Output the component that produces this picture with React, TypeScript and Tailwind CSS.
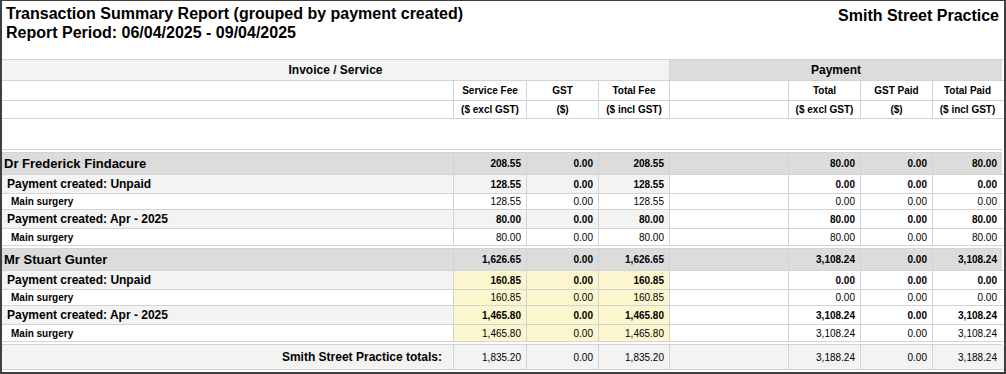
import React from "react";

const GRID = "grid grid-cols-[451px_73px_72px_71px_119px_72px_72px_70px]";
const LINE = "border-[#d3d3d3]";

type Sub = { label: string; v: string[] };
type Group = { name: string; totals: string[]; yellow: boolean; subs: Sub[] };

const groups: Group[] = [
  {
    name: "Dr Frederick Findacure",
    totals: ["208.55", "0.00", "208.55", "80.00", "0.00", "80.00"],
    yellow: false,
    subs: [
      { label: "Payment created: Unpaid", v: ["128.55", "0.00", "128.55", "0.00", "0.00", "0.00"] },
      { label: "Payment created: Apr - 2025", v: ["80.00", "0.00", "80.00", "80.00", "0.00", "80.00"] },
    ],
  },
  {
    name: "Mr Stuart Gunter",
    totals: ["1,626.65", "0.00", "1,626.65", "3,108.24", "0.00", "3,108.24"],
    yellow: true,
    subs: [
      { label: "Payment created: Unpaid", v: ["160.85", "0.00", "160.85", "0.00", "0.00", "0.00"] },
      { label: "Payment created: Apr - 2025", v: ["1,465.80", "0.00", "1,465.80", "3,108.24", "0.00", "3,108.24"] },
    ],
  },
];

function NumCell({ value, bg, bold }: { value: string; bg: string; bold: boolean }) {
  return (
    <div
      className={`flex items-center justify-end border-l ${LINE} pr-[5px] text-[10px] ${bold ? "font-bold" : "font-normal"} ${bg}`}
    >
      {value}
    </div>
  );
}

function DataRow({
  label,
  labelClass,
  h,
  values,
  invBg,
  restBg,
  bold,
}: {
  label: string;
  labelClass: string;
  h: string;
  values: string[];
  invBg: string;
  restBg: string;
  bold: boolean;
}) {
  return (
    <div className={`${GRID} ${h} border-b ${LINE}`}>
      <div className={`flex items-center ${labelClass}`}>{label}</div>
      <NumCell value={values[0]} bg={invBg} bold={bold} />
      <NumCell value={values[1]} bg={invBg} bold={bold} />
      <NumCell value={values[2]} bg={invBg} bold={bold} />
      <div className={`border-l ${LINE} ${restBg}`} />
      <NumCell value={values[3]} bg={restBg} bold={bold} />
      <NumCell value={values[4]} bg={restBg} bold={bold} />
      <NumCell value={values[5]} bg={restBg} bold={bold} />
    </div>
  );
}

function Gap() {
  return <div className={`h-[3px] w-[1000px] border-b ${LINE}`} />;
}

export default function App() {
  return (
    <div className="w-[1006px] h-[374px] bg-white text-black border-l-2 border-r-2 border-b-2 border-t border-[#3f3f3f] font-['Liberation_Sans',Arial,sans-serif] overflow-hidden">
      <div className="h-[58px] flex justify-between">
        <div className="pl-[4px] pt-[3px] text-[16px] font-bold leading-[19px]">
          <div>Transaction Summary Report (grouped by payment created)</div>
          <div>Report Period: 06/04/2025 - 09/04/2025</div>
        </div>
        <div className="pr-[5px] pt-[5px] text-[16px] font-bold leading-[19px]">Smith Street Practice</div>
      </div>
      <div className={`border-t ${LINE}`}>
        {/* header row 1 */}
        <div className={`${GRID} h-[21px] border-b ${LINE} text-[12px] font-bold`}>
          <div className="col-span-4 flex items-center justify-center bg-[#f3f3f3]">Invoice / Service</div>
          <div className={`col-span-4 flex items-center justify-center bg-[#dcdcdc] border-l ${LINE}`}>Payment</div>
        </div>
        {/* header row 2 */}
        <div className={`${GRID} h-[20px] border-b ${LINE} text-[10px] font-bold`}>
          <div />
          {["Service Fee", "GST", "Total Fee", "", "Total", "GST Paid", "Total Paid"].map((t, i) => (
            <div key={i} className={`flex items-center justify-center border-l ${LINE}`}>
              {t}
            </div>
          ))}
        </div>
        {/* header row 3 */}
        <div className={`${GRID} h-[18px] border-b ${LINE} text-[10px] font-bold`}>
          <div />
          {["($ excl GST)", "($)", "($ incl GST)", "", "($ excl GST)", "($)", "($ incl GST)"].map((t, i) => (
            <div key={i} className={`flex items-center justify-center border-l ${LINE}`}>
              {t}
            </div>
          ))}
        </div>
        {/* spacer */}
        <div className={`h-[31px] w-[1000px] border-b ${LINE}`} />
        <Gap />
        {groups.map((g, gi) => {
          const invBg = g.yellow ? "bg-[#fcf6cf]" : "bg-[#f3f3f3]";
          const detBg = g.yellow ? "bg-[#fcf6cf]" : "bg-white";
          return (
            <React.Fragment key={gi}>
              <DataRow
                label={g.name}
                labelClass="pl-[2px] text-[13px] font-bold bg-[#dcdcdc]"
                h="h-[22px]"
                values={g.totals}
                invBg="bg-[#dcdcdc]"
                restBg="bg-[#dcdcdc]"
                bold
              />
              {g.subs.map((s, si) => (
                <React.Fragment key={si}>
                  <DataRow
                    label={s.label}
                    labelClass="pl-[5px] text-[12px] font-bold bg-[#f3f3f3]"
                    h="h-[19px]"
                    values={s.v}
                    invBg={invBg}
                    restBg="bg-white"
                    bold
                  />
                  <DataRow
                    label="Main surgery"
                    labelClass="pl-[9px] text-[10px] font-bold bg-white"
                    h={si === 0 ? "h-[16px]" : "h-[17px]"}
                    values={s.v}
                    invBg={detBg}
                    restBg="bg-white"
                    bold={false}
                  />
                </React.Fragment>
              ))}
              <Gap />
            </React.Fragment>
          );
        })}
        <div className={`${GRID} h-[25px] border-b ${LINE} bg-[#f3f3f3]`}>
          <div className="flex items-center justify-end pr-[11px] text-[12px] font-bold">Smith Street Practice totals:</div>
          <NumCell value="1,835.20" bg="" bold={false} />
          <NumCell value="0.00" bg="" bold={false} />
          <NumCell value="1,835.20" bg="" bold={false} />
          <div className={`border-l ${LINE}`} />
          <NumCell value="3,188.24" bg="" bold={false} />
          <NumCell value="0.00" bg="" bold={false} />
          <NumCell value="3,188.24" bg="" bold={false} />
        </div>
      </div>
    </div>
  );
}
